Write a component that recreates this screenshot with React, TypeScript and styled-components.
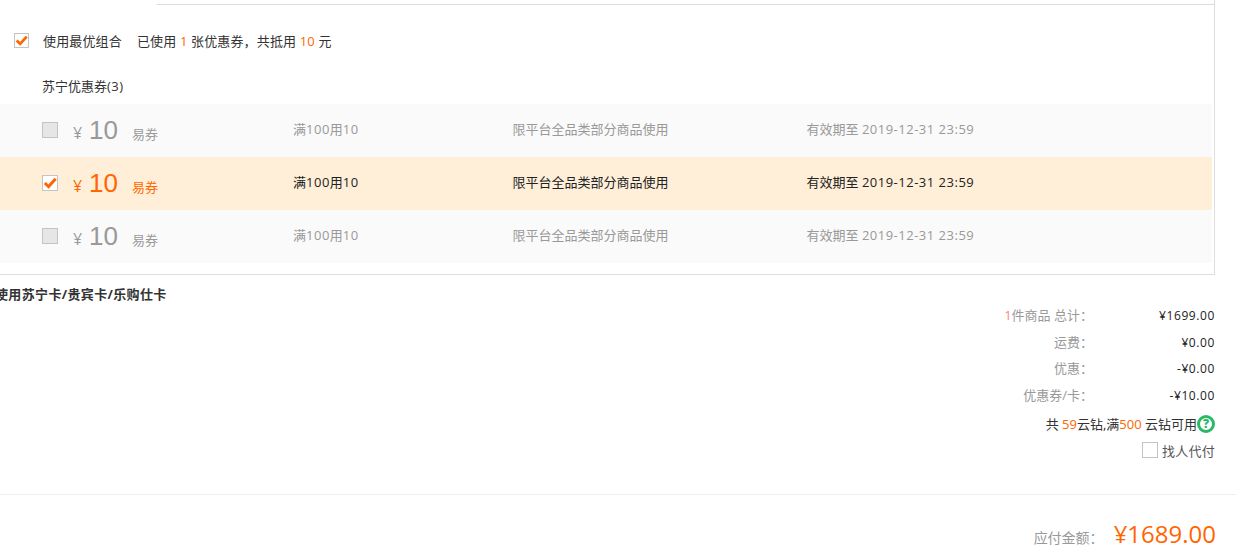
import { createGlobalStyle } from "styled-components";
import styled from "styled-components";

const GlobalStyle = createGlobalStyle`
  html, body {
    margin: 0;
    padding: 0;
    background: #fff;
    overflow: hidden;
  }
  body {
    font-family: "Open Sans", "Noto Sans CJK SC", sans-serif;
    font-size: 13px;
    color: #333;
  }
`;

const Page = styled.div`
  width: 1236px;
  height: 558px;
  overflow: hidden;
`;

// 优惠券 panel, the active tab sits above it so the top border starts at 157px
const Panel = styled.section`
  width: 1215px;
  height: 275px;
  box-sizing: border-box;
  padding-top: 5px;
  border-right: 1px solid #ddd;
  border-bottom: 1px solid #ddd;
`;

const TabLine = styled.div`
  height: 1px;
  margin-left: 157px;
  margin-top: -1px;
  background: #ddd;
`;

const BestRow = styled.div`
  display: flex;
  align-items: center;
  height: 20px;
  margin-top: 25px;
  padding-left: 14px;
  letter-spacing: 0.15px;
`;

const BestLabel = styled.span`
  margin-left: 14px;
  margin-right: 15px;
  color: #333;
`;

const Orange = styled.span`
  color: #ff6600;
`;

const SectionTitle = styled.div`
  height: 20px;
  line-height: 20px;
  margin-top: 26px;
  margin-bottom: 8px;
  padding-left: 42px;
  color: #333;
`;

const Box = styled.span<{ $size: number; $disabled?: boolean }>`
  display: inline-flex;
  align-items: center;
  justify-content: center;
  flex: none;
  box-sizing: border-box;
  width: ${(p) => p.$size}px;
  height: ${(p) => p.$size}px;
  border: 1px solid #c4c4c4;
  background: ${(p) => (p.$disabled ? "#e6e6e6" : "#fff")};
`;

const Row = styled.div<{ $active?: boolean }>`
  display: grid;
  grid-template-columns: 31px 220px 219.5px 294px 1fr;
  align-items: center;
  width: 1212px;
  height: 53px;
  padding-left: 42px;
  box-sizing: border-box;
  background: ${(p) => (p.$active ? "#ffefd9" : "#fafafa")};
  color: ${(p) => (p.$active ? "#222" : "#999")};
`;

const Cell = styled.div`
  white-space: nowrap;
  padding-bottom: 4px;
`;

const BoxCell = styled.div`
  display: flex;
  padding-bottom: 2px;
`;

const Num = styled.span`
  letter-spacing: 0.5px;
`;

const Amount = styled.div<{ $active?: boolean }>`
  display: flex;
  align-items: baseline;
  padding-bottom: 2px;
  color: ${(p) => (p.$active ? "#ff6600" : "#999")};
  white-space: nowrap;
`;

const Yen = styled.span`
  font-size: 16px;
  width: 16px;
  font-family: "Open Sans", sans-serif;
`;

const Value = styled.span`
  font-size: 26px;
  line-height: 30px;
  width: 43px;
  font-family: "Liberation Sans", sans-serif;
`;

const Kind = styled.span`
  font-size: 13px;
`;

const CheckMark = ({ size }: { size: number }) => (
  <svg width={size} height={size} viewBox="0 0 14 14">
    <path d="M1.8 7 L5.6 10.6 L12.6 2.8" fill="none" stroke="#ff6600" strokeWidth="3" />
  </svg>
);

const CardTitle = styled.div`
  height: 20px;
  line-height: 20px;
  margin-top: 9px;
  margin-left: -5px;
  font-weight: 700;
  letter-spacing: 0.35px;
  color: #333;
`;

const Summary = styled.div`
  width: 1215px;
  margin-top: -2px;
  display: flex;
  flex-direction: column;
  align-items: flex-end;
`;

const SumRow = styled.div`
  display: flex;
  height: 26.6px;
  line-height: 27px;
  color: #999;
`;

const SumLabel = styled.span`
  text-align: right;
`;

const SumValue = styled.span`
  width: 122px;
  text-align: right;
  color: #222;
  font-size: 12px;
  letter-spacing: 0.6px;
`;

const Pink = styled.span`
  color: #f08a8a;
`;

const DiamondRow = styled.div`
  display: flex;
  align-items: center;
  height: 26px;
  margin-top: 2.6px;
  color: #333;
`;

const HelpIcon = styled.span`
  display: inline-flex;
  align-items: center;
  justify-content: center;
  box-sizing: border-box;
  width: 18px;
  height: 18px;
  border: 3px solid #2bb868;
  border-radius: 50%;
  color: #2bb868;
  font-size: 12px;
  font-weight: 800;
  line-height: 1;
`;

const ProxyRow = styled.div`
  display: flex;
  align-items: center;
  gap: 4px;
  height: 27px;
  letter-spacing: 0.25px;
  color: #555;
`;

const Divider = styled.div`
  height: 1px;
  margin-top: 30px;
  background: #eee;
`;

const Total = styled.div`
  width: 1216px;
  margin-top: 19px;
  display: flex;
  justify-content: flex-end;
  align-items: baseline;
`;

const TotalLabel = styled.span`
  font-size: 14px;
  color: #999;
  margin-right: 10px;
`;

const TotalValue = styled.span`
  font-size: 24px;
  line-height: 40px;
  color: #ff6600;
`;

const coupons = [
  { id: 1, active: false },
  { id: 2, active: true },
  { id: 3, active: false },
];

const sums = [
  { label: "运费：", value: "¥0.00" },
  { label: "优惠：", value: "-¥0.00" },
  { label: "优惠券/卡：", value: "-¥10.00" },
];

export default function App() {
  return (
    <Page>
      <GlobalStyle />
      <Panel>
        <TabLine />
        <BestRow>
          <Box $size={15}>
            <CheckMark size={13} />
          </Box>
          <BestLabel>使用最优组合</BestLabel>
          <span>
            已使用 <Orange>1</Orange> 张优惠券，共抵用 <Orange>10</Orange> 元
          </span>
        </BestRow>
        <SectionTitle>
          苏宁优惠券<Num>(3)</Num>
        </SectionTitle>
        {coupons.map((c) => (
          <Row key={c.id} $active={c.active}>
            <BoxCell>
              <Box $size={16} $disabled={!c.active}>
                {c.active && <CheckMark size={14} />}
              </Box>
            </BoxCell>
            <Amount $active={c.active}>
              <Yen>¥</Yen>
              <Value>10</Value>
              <Kind>易券</Kind>
            </Amount>
            <Cell>
              满<Num>100</Num>用<Num>10</Num>
            </Cell>
            <Cell>限平台全品类部分商品使用</Cell>
            <Cell>
              有效期至 <Num>2019-12-31 23:59</Num>
            </Cell>
          </Row>
        ))}
      </Panel>
      <CardTitle>使用苏宁卡/贵宾卡/乐购仕卡</CardTitle>
      <Summary>
        <SumRow>
          <SumLabel>
            <Pink>1</Pink>件商品 总计：
          </SumLabel>
          <SumValue>¥1699.00</SumValue>
        </SumRow>
        {sums.map((s) => (
          <SumRow key={s.label}>
            <SumLabel>{s.label}</SumLabel>
            <SumValue>{s.value}</SumValue>
          </SumRow>
        ))}
        <DiamondRow>
          <span>
            共 <Orange>59</Orange>云钻,满<Orange>500</Orange> 云钻可用
          </span>
          <HelpIcon>?</HelpIcon>
        </DiamondRow>
        <ProxyRow>
          <Box $size={16} />
          <span>找人代付</span>
        </ProxyRow>
      </Summary>
      <Divider />
      <Total>
        <TotalLabel>应付金额：</TotalLabel>
        <TotalValue>¥1689.00</TotalValue>
      </Total>
    </Page>
  );
}
